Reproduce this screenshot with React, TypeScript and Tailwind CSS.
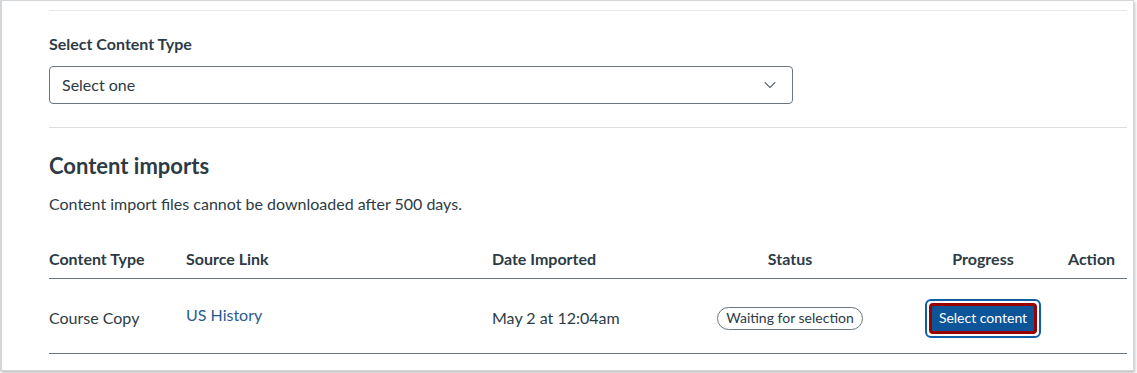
import { ChevronDown } from "lucide-react";

const columns = "grid grid-cols-[137px_306px_213px_170px_193px_59px]";

const ImportRow = () => {
  return (
    <div className={`${columns} h-[75px] items-center border-b border-[#6b7780] pt-[4px]`}>
      <div>Course Copy</div>
      <div className="pb-[6px]">
        <a href="#" className="text-[#2a5b94]">
          US History
        </a>
      </div>
      <div>May 2 at 12:04am</div>
      <div className="flex justify-center">
        <span className="inline-flex h-[23px] items-center rounded-full border border-[#6b7780] px-[8px] text-sm">
          Waiting for selection
        </span>
      </div>
      <div className="flex justify-center pl-[23px]">
        <span className="rounded-md border-2 border-[#0e5ea8] p-[2px]">
          <button className="flex h-[31px] items-center rounded border-[3px] border-[#990000] bg-[#0d5599] px-[7px] text-sm text-white">
            Select content
          </button>
        </span>
      </div>
      <div></div>
    </div>
  );
};

export default function App() {
  return (
    <div className="h-[373px] w-[1137px] bg-white font-['Lato',sans-serif] text-base text-[#2d3b45]">
      <div className="h-[371px] w-[1134px] border border-l-2 border-[#d3d6d9] pl-[47px] pr-[6px] pt-[9px] shadow-[1px_2px_3px_rgba(0,0,0,0.25)]">
        <div className="border-t border-[#e6e8ea]"></div>

        <div className="mt-[21px] font-bold leading-6">Select Content Type</div>
        <div className="mt-[10px] flex h-[38px] w-[744px] items-center justify-between rounded border border-[#6b7780] pl-[12px] pr-[12px]">
          <span>Select one</span>
          <ChevronDown size={20} strokeWidth={1.25} />
        </div>

        <div className="mt-[23px] border-t border-[#dcdfe2]"></div>

        <h2 className="mt-[24px] text-[22px] font-bold leading-7">Content imports</h2>
        <p className="mt-[12px] leading-6">
          Content import files cannot be downloaded after 500 days.
        </p>

        <div className="mt-[24px]">
          <div className={`${columns} h-[39px] items-center border-b border-[#6b7780] font-bold`}>
            <div>Content Type</div>
            <div>Source Link</div>
            <div>Date Imported</div>
            <div className="text-center">Status</div>
            <div className="pl-[23px] text-center">Progress</div>
            <div>Action</div>
          </div>
          <ImportRow />
        </div>
      </div>
    </div>
  );
}
